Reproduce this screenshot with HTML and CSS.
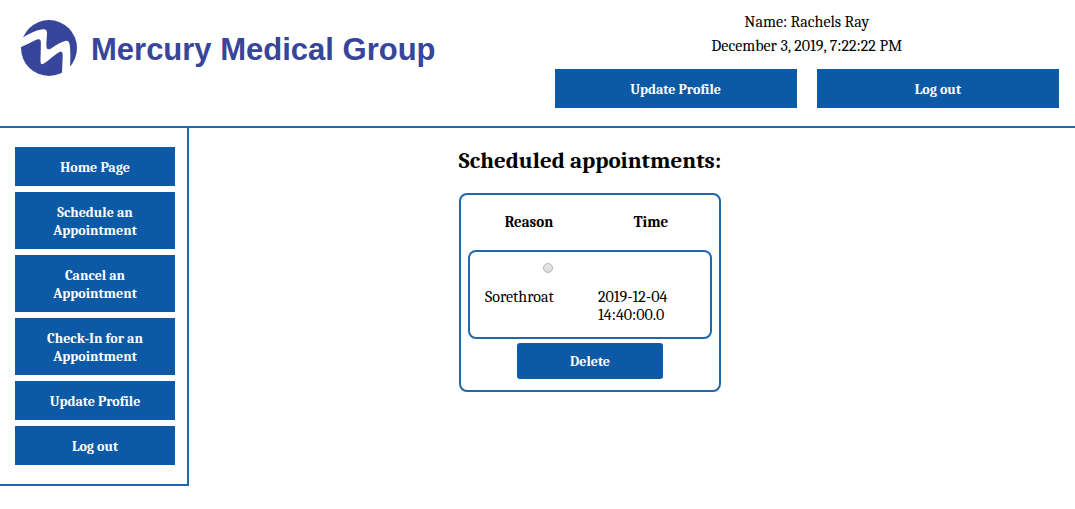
FILE: index.html
```html
<!DOCTYPE html>
<html lang="en">
<head>
<meta charset="utf-8">
<title>Mercury Medical Group</title>
<link rel="stylesheet" href="styles.css">
</head>
<body>
<header class="header">
  <div class="brand">
    <svg class="brand-mark" viewBox="0 0 56 56" aria-hidden="true">
      <circle cx="28" cy="28" r="28" fill="#37459b"/>
      <path d="M-1 19 L2 17.500 C8 13.500 15 10 22 9.200 C25.500 9 26.200 10.500 26 14 L25.300 24 C25.200 29 26.500 30.500 30 28.500 C35 25 40 22 45 20.800 C47.800 20.500 48.600 23 49 27 C49.600 34 49.300 41 49 46.500 L50 57 H41 V52.500 L41.700 36 C41.800 32 41 31 38.500 32 C34 34.500 27 41 22.500 43.800 C20 45 19.400 43.500 19.500 40 L19.900 23 C19.800 19.500 19 18.500 16 19.500 C12 21 6 24.500 0 27 L-1 27.500 Z" fill="#fff"/>
    </svg>
    <span class="brand-name">Mercury Medical Group</span>
  </div>
  <div class="account">
    <p class="account-line">Name: Rachels Ray</p>
    <p class="account-line">December 3, 2019, 7:22:22 PM</p>
    <div class="account-actions">
      <button class="button" type="button">Update Profile</button>
      <button class="button" type="button">Log out</button>
    </div>
  </div>
</header>
<div class="layout">
  <nav class="sidebar">
    <button class="button" type="button">Home Page</button>
    <button class="button" type="button">Schedule an Appointment</button>
    <button class="button" type="button">Cancel an Appointment</button>
    <button class="button" type="button">Check-In for an Appointment</button>
    <button class="button" type="button">Update Profile</button>
    <button class="button" type="button">Log out</button>
  </nav>
  <main class="content">
    <h1 class="title">Scheduled appointments:</h1>
    <form class="card">
      <table class="appointments">
        <thead>
          <tr class="head-row"><th>Reason</th><th>Time</th></tr>
        </thead>
        <tbody>
          <tr class="appointment">
            <td class="pick"><input class="radio" type="radio" name="appointment" id="appointment-1"></td>
            <td class="reason"><label for="appointment-1">Sorethroat</label></td>
            <td class="time">2019-12-04 14:40:00.0</td>
          </tr>
        </tbody>
      </table>
      <button class="button button-delete" type="button">Delete</button>
    </form>
  </main>
</div>
</body>
</html>
```
FILE: styles.css
```css
* {
  box-sizing: border-box;
}

body {
  margin: 0;
  background: #fff;
  color: #000;
  font: 16px/18px Cambria, "DejaVu Serif Condensed", "DejaVu Serif", serif;
}

.header {
  display: grid;
  grid-template-columns: 1fr 1fr;
  border-bottom: 2px solid #2068ae;
}

.brand {
  display: flex;
  align-items: flex-start;
  gap: 14px;
  padding: 20px 0 0 21px;
}

.brand-mark {
  width: 56px;
  height: 56px;
  flex: none;
}

.brand-name {
  color: #37459b;
  font: bold 31px/60px "Liberation Sans", Arial, sans-serif;
  white-space: nowrap;
}

.account {
  padding: 10px 16px 18px 17px;
  text-align: center;
}

.account-line {
  margin: 0;
  line-height: 24px;
}

.account-actions {
  display: grid;
  grid-template-columns: 1fr 1fr;
  gap: 20px;
  margin-top: 11px;
}

.button {
  padding: 12px 16px 9px;
  border: 0;
  background: #0c5aa6;
  color: #fff;
  font: bold 14px/18px Cambria, "DejaVu Serif Condensed", "DejaVu Serif", serif;
}

.layout {
  display: flex;
  align-items: flex-start;
}

.sidebar {
  display: flex;
  flex: none;
  flex-direction: column;
  gap: 6px;
  width: 189px;
  padding: 19px 12px 19px 15px;
  border: solid #2068ae;
  border-width: 0 2px 2px 0;
}

.content {
  display: flex;
  flex: 1;
  flex-direction: column;
  align-items: center;
  padding: 20px 84px 20px 0;
}

.title {
  margin: 0 0 19px;
  font-size: 23px;
  line-height: 26px;
}

.card {
  display: flex;
  flex-direction: column;
  align-items: center;
  gap: 4px;
  width: 262px;
  padding: 8px 7px 11px;
  border: 2px solid #2068ae;
  border-radius: 8px;
}

.appointments,
.appointments thead,
.appointments tbody {
  display: block;
  width: 100%;
}

.head-row,
.appointment {
  display: grid;
  grid-template-columns: 1fr 1fr;
}

.head-row {
  padding: 10px 0 19px;
}

.appointments th,
.appointments td {
  padding: 0;
}

.appointments th {
  font-size: 15px;
}

.appointment {
  padding: 11px 15px 13px;
  border: 2px solid #2068ae;
  border-radius: 8px;
}

.appointment .pick {
  grid-column: 1 / 3;
  padding: 0 0 15px 58px;
  line-height: 0;
}

.appointment .time {
  padding-left: 8px;
}

.radio {
  width: 10px;
  height: 10px;
  margin: 0;
  appearance: none;
  border: 1px solid #b5b5b5;
  border-radius: 50%;
  background: linear-gradient(#e8e8e8, #d8d8d8);
}

.button-delete {
  width: 60%;
  padding: 10px 16px 8px;
  border-radius: 3px;
}
```
